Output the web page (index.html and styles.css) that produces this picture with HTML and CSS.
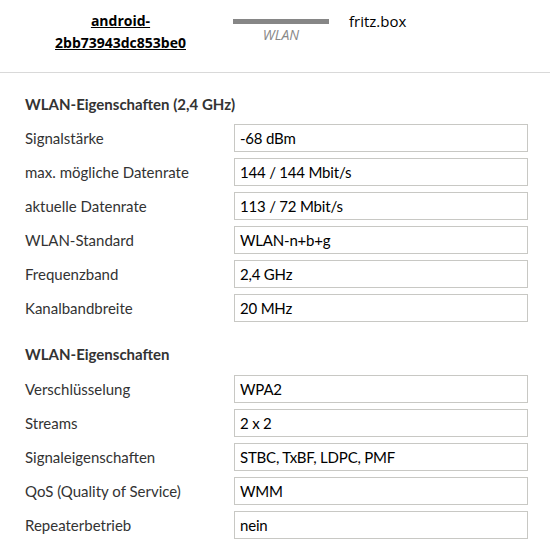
FILE: index.html
```html
<!DOCTYPE html>
<html lang="de">
<head>
<meta charset="utf-8">
<title>WLAN</title>
<link rel="stylesheet" href="styles.css">
</head>
<body>
<header class="conn">
  <div class="device"><a href="#">android-<br>2bb73943dc853be0</a></div>
  <div class="link">
    <div class="bar"></div>
    <div class="link-label">WLAN</div>
  </div>
  <div class="peer">fritz.box</div>
</header>
<main class="content">
  <h2 class="heading">WLAN-Eigenschaften (2,4 GHz)</h2>
  <div class="rows">
    <div class="label">Signalstärke</div><div class="value">-68 dBm</div>
    <div class="label">max. mögliche Datenrate</div><div class="value">144 / 144 Mbit/s</div>
    <div class="label">aktuelle Datenrate</div><div class="value">113 / 72 Mbit/s</div>
    <div class="label">WLAN-Standard</div><div class="value">WLAN-n+b+g</div>
    <div class="label">Frequenzband</div><div class="value">2,4 GHz</div>
    <div class="label">Kanalbandbreite</div><div class="value">20 MHz</div>
  </div>
  <h2 class="heading second">WLAN-Eigenschaften</h2>
  <div class="rows">
    <div class="label">Verschlüsselung</div><div class="value">WPA2</div>
    <div class="label">Streams</div><div class="value">2 x 2</div>
    <div class="label">Signaleigenschaften</div><div class="value">STBC, TxBF, LDPC, PMF</div>
    <div class="label">QoS (Quality of Service)</div><div class="value">WMM</div>
    <div class="label">Repeaterbetrieb</div><div class="value">nein</div>
  </div>
</main>
</body>
</html>
```
FILE: styles.css
```css
html, body {
  margin: 0;
  padding: 0;
  background: #fff;
}
body {
  font-family: "Lato", "Liberation Sans", sans-serif;
  font-size: 15px;
  color: #333;
}
.conn {
  display: flex;
  align-items: flex-start;
  height: 62px;
  padding-top: 10px;
  border-bottom: 1px solid #d9d9d9;
  font-family: "Open Sans", "Liberation Sans", sans-serif;
}
.device {
  width: 201px;
  margin-left: 20px;
  text-align: center;
  line-height: 22px;
  font-size: 14px;
}
.device a {
  color: #000;
  font-weight: bold;
  text-decoration: underline;
}
.link {
  margin-left: 12px;
  width: 96px;
  padding-top: 9px;
  text-align: center;
}
.bar {
  height: 5px;
  background: #868686;
}
.link-label {
  margin-top: 3px;
  font-size: 14px;
  font-style: italic;
  color: #888;
  line-height: 16px;
}
.peer {
  margin-left: 20px;
  line-height: 22px;
  color: #000;
}
.content {
  padding: 0 22px 0 25px;
}
.heading {
  margin: 21px 0 10px;
  font-size: 15px;
  line-height: 20px;
  font-weight: bold;
  color: #333;
}
.heading.second {
  margin-top: 22px;
  margin-bottom: 11px;
}
.rows {
  display: grid;
  grid-template-columns: 209px 1fr;
  row-gap: 6px;
  align-items: center;
}
.label {
  color: #333;
  line-height: 20px;
}
.value {
  height: 26px;
  line-height: 26px;
  border: 1px solid #c8c8c4;
  padding: 0 5px;
  color: #000;
  letter-spacing: -0.2px;
}
```
